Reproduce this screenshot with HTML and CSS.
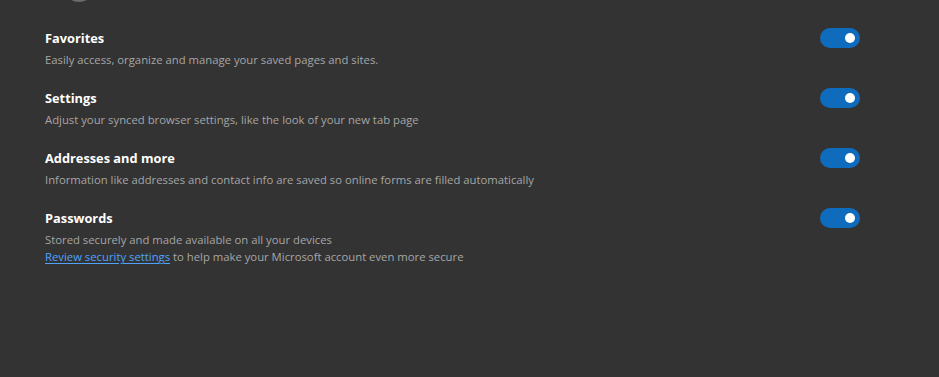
FILE: index.html
```html
<!DOCTYPE html>
<html lang="en">
<head>
<meta charset="utf-8">
<title>Sync</title>
<link rel="stylesheet" href="styles.css">
</head>
<body>
<div class="page">
  <div class="header">
    <span class="avatar"></span>
    <span class="status">Sync is on</span>
  </div>
  <div class="list">
    <div class="row">
      <div class="text">
        <div class="title">Favorites</div>
        <div class="desc">Easily access, organize and manage your saved pages and sites.</div>
      </div>
      <span class="toggle on"><span class="knob"></span></span>
    </div>
    <div class="row">
      <div class="text">
        <div class="title">Settings</div>
        <div class="desc">Adjust your synced browser settings, like the look of your new tab page</div>
      </div>
      <span class="toggle on"><span class="knob"></span></span>
    </div>
    <div class="row">
      <div class="text">
        <div class="title">Addresses and more</div>
        <div class="desc">Information like addresses and contact info are saved so online forms are filled automatically</div>
      </div>
      <span class="toggle on"><span class="knob"></span></span>
    </div>
    <div class="row">
      <div class="text">
        <div class="title">Passwords</div>
        <div class="desc">Stored securely and made available on all your devices</div>
        <div class="desc"><a class="link" href="#">Review security settings</a> to help make your Microsoft account even more secure</div>
      </div>
      <span class="toggle on"><span class="knob"></span></span>
    </div>
  </div>
</div>
</body>
</html>
```
FILE: styles.css
```css
html, body {
  margin: 0;
  padding: 0;
  background: #333333;
  height: 100%;
}
body {
  font-family: "Open Sans", "Noto Sans", sans-serif;
  color: #ffffff;
  overflow: hidden;
}
.page {
  padding: 0 79px 0 45px;
}
.header {
  display: flex;
  align-items: flex-end;
  gap: 46px;
  height: 36px;
  margin-top: -34px;
  padding-left: 18px;
}
.avatar {
  width: 32px;
  height: 32px;
  border-radius: 50%;
  background: #6a6a6a;
  flex-shrink: 0;
}
.status {
  color: #3fbf6f;
  font-size: 12px;
  line-height: 16px;
  margin-bottom: 1px;
}
.list {
  display: flex;
  flex-direction: column;
  padding-top: 26px;
}
.row {
  display: flex;
  justify-content: space-between;
  align-items: flex-start;
  padding-bottom: 20px;
}
.title {
  font-size: 12.8px;
  font-weight: 700;
  line-height: 20px;
  color: #ffffff;
}
.desc {
  font-size: 11.3px;
  line-height: 17px;
  color: #a6a6a6;
}
.title + .desc {
  margin-top: 3px;
}
.link {
  color: #4da3ff;
  text-decoration: underline;
  text-underline-offset: 2px;
}
.toggle {
  width: 40px;
  height: 20px;
  border-radius: 10px;
  background: #0f6cbd;
  display: flex;
  align-items: center;
  justify-content: flex-end;
  padding-right: 5px;
  box-sizing: border-box;
  flex-shrink: 0;
}
.knob {
  width: 10px;
  height: 10px;
  border-radius: 50%;
  background: #ffffff;
}
```
